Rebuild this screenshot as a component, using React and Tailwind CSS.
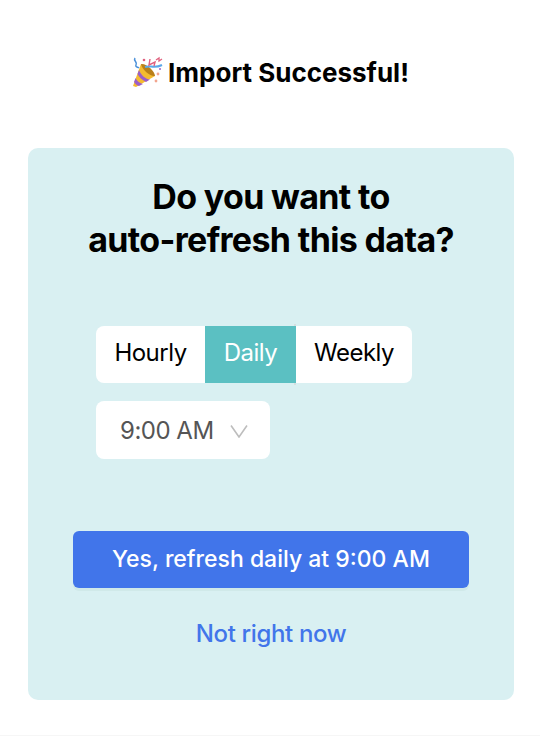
const PartyPopper = () => (
  <svg width="33" height="33" viewBox="0 0 33 33" className="shrink-0">
    <path d="M2 30 L10 8 L24 20 L5 31 Z" fill="#f4bb30" />
    <path d="M10 8 C15 7 24 15 24 20 C20 21 11 14 10 8 Z" fill="#b9801a" />
    <path d="M8 14 C10 19 14 23 19 23.5 L15 26 C11 24 8 21 6.5 18 Z" fill="#9b5fc9" />
    <path d="M4.5 22 C6 25 9 27.5 12 28 L8 30 C6 29.5 4 27.5 3 26 Z" fill="#9b5fc9" />
    <path d="M14 11 C19 9 23 13 31 9" fill="none" stroke="#5aa7e8" strokeWidth="2" />
    <path d="M19 3 L18 9 L24 6 L23 10" fill="none" stroke="#e0607e" strokeWidth="1.4" />
    <path d="M25 4 L28 2 L28 5 L31 3" fill="none" stroke="#e0607e" strokeWidth="1.3" />
    <path d="M4 2 C2 5 7 6 5 9 C4 11 7 11 8 12" fill="none" stroke="#4a90d9" strokeWidth="1.5" />
    <circle cx="13" cy="4" r="1.3" fill="#e0607e" />
    <circle cx="27" cy="18" r="1.4" fill="#f2a58e" />
    <circle cx="25" cy="25" r="1.4" fill="#f2a58e" />
    <circle cx="29" cy="13" r="1" fill="#9b5fc9" />
  </svg>
);

const App = () => {
  return (
    <div className="flex h-[736px] w-[540px] flex-col overflow-hidden border-b border-[#f6f6f6] bg-white font-['Inter','Noto_Sans',sans-serif] text-black">
      {/* Header */}
      <div className="flex h-[148px] items-center justify-center gap-[4px] pb-[3px]">
        <PartyPopper />
        <h1 className="text-[26px] font-bold">Import Successful!</h1>
      </div>

      {/* Card */}
      <div className="ml-[28px] flex h-[552px] w-[486px] flex-col rounded-[10px] bg-[#d9f0f2]">
        <h2 className="mt-[27px] text-center text-[34px] leading-[43px] font-bold tracking-[-0.65px]">
          Do you want to
          <br />
          auto-refresh this data?
        </h2>

        {/* Frequency */}
        <div className="relative mt-[65px] ml-[68px] h-[57px] w-[316px]">
          <span className="absolute -top-[2px] -bottom-[2px] left-[198px] w-[2px] bg-[#d5dfe0]" />
          <div className="relative flex h-full overflow-hidden rounded-[8px] bg-white text-[24px] tracking-[-0.5px]">
            <button className="w-[109px] pb-[3px]">Hourly</button>
            <button className="w-[91px] bg-[#5bc0c2] pb-[3px] text-white">Daily</button>
            <button className="w-[116px] pb-[3px]">Weekly</button>
          </div>
        </div>

        {/* Time select */}
        <div className="mt-[18px] ml-[68px] flex h-[58px] w-[174px] items-center rounded-[8px] bg-white pt-px pl-[24px] text-[24px] tracking-[-0.5px] text-[#555555]">
          <span>9:00 AM</span>
          <svg width="20" height="14" viewBox="0 0 20 14" className="ml-[15px]" fill="none" stroke="#bdbdbd" strokeWidth="1.6">
            <path d="M2 1.5 L10 13 L18 1.5" />
          </svg>
        </div>

        {/* Actions */}
        <button className="mt-[72px] ml-[45px] h-[57px] w-[396px] rounded-[6px] bg-[#4175ea] text-[23px] font-medium text-white shadow-[0_3px_0_#d0e9e9]">
          Yes, refresh daily at 9:00 AM
        </button>
        <button className="mt-[29px] text-center text-[24px] leading-[33px] font-medium tracking-[-0.35px] text-[#4175ea]">
          Not right now
        </button>
      </div>
    </div>
  );
};

export default App;
